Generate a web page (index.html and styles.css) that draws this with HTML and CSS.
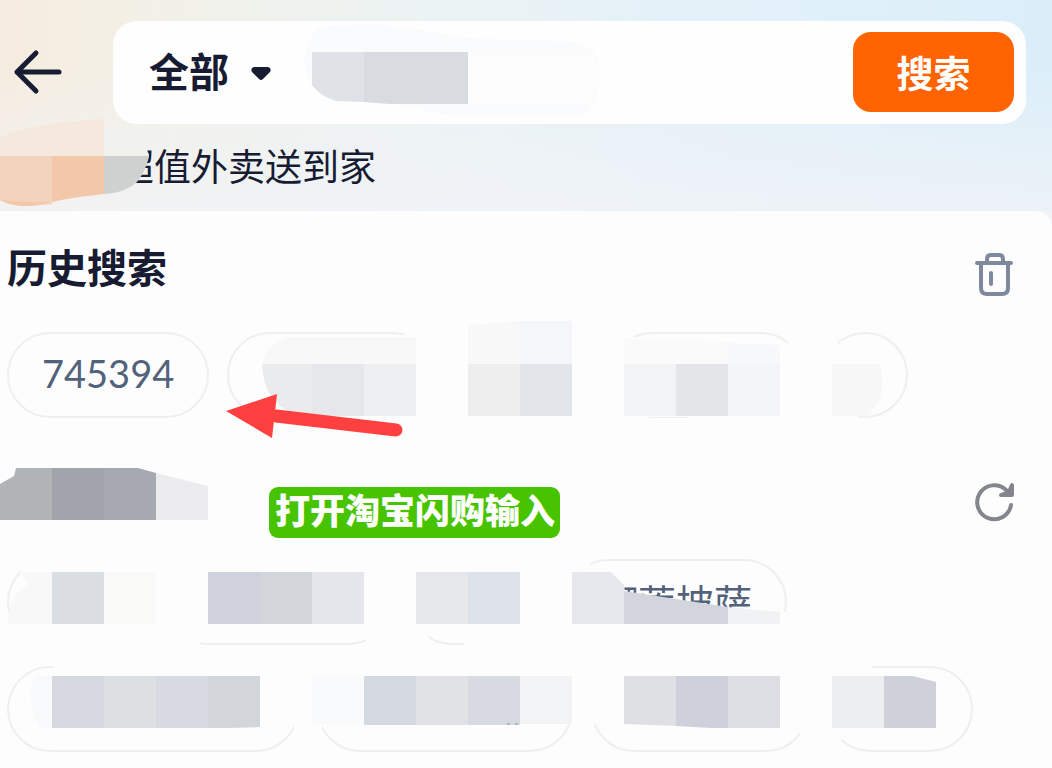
FILE: index.html
```html
<!DOCTYPE html>
<html lang="zh-CN">
<head>
    <meta charset="UTF-8">
    <meta name="viewport" content="width=device-width, initial-scale=1.0">
    <title>搜索</title>
    <link rel="stylesheet" href="styles.css">
</head>
<body>

    <header class="header">
        <div class="top-row">
            <button type="button" class="icon-btn back" aria-label="返回">
                <svg width="52" height="48" viewBox="0 0 52 48" fill="none" stroke="#171c33" stroke-width="5" stroke-linecap="round" stroke-linejoin="round">
                    <path d="M47 23H5M24 4L5 23l19 19"/>
                </svg>
            </button>
            <form class="search-box">
                <select class="scope" aria-label="搜索范围">
                    <option>全部</option>
                </select>
                <svg class="caret" width="20" height="14" viewBox="0 0 20 14" fill="#171c33">
                    <path d="M3 1h14q4 1 2 5l-7 7q-2 2-4 0L1 6Q-1 2 3 1z"/>
                </svg>
                <input class="keyword" type="text" aria-label="搜索内容">
                <button type="button" class="search-btn">搜索</button>
            </form>
        </div>
        <a class="promo" href="#">超值外卖送到家</a>

        <svg class="mosaic" width="1052" height="211" viewBox="0 0 1052 211">
            <path fill="#fafbfc" d="M312 85Q303 75 305 58Q308 32 324 26L380 24Q420 30 468 38L575 42Q596 48 600 65L592 104Q588 117 570 117L450 115L390 104L336 101z"/>
            <path fill="#fcfcfd" d="M468 52h124q12 20 4 52H468z"/>
            <path fill="#dfe2e6" d="M312 52h52v50l-28-1q-16-5-24-16z"/>
            <path fill="#d8dbe0" d="M364 52h104v52h-78l-26-2z"/>
            <path fill="#f1f1ed" d="M104 126h36l9 30h-45z"/>
            <path fill="#f5e8dc" d="M0 138Q30 123 104 119v37H0z"/>
            <path fill="#f3d3bc" d="M0 156h52v48Q15 209 0 200z"/>
            <path fill="#f3c8aa" d="M52 156h52v38q-30 3-52 8z"/>
            <path fill="#f3c8aa" d="M0 200Q25 203 52 202Q20 211 0 200z"/>
            <path fill="#cfd1d1" d="M104 156h45q-3 15-12 26-12 11-33 12z"/>
        </svg>
    </header>

    <main class="panel">
        <div class="section-head">
            <h2>历史搜索</h2>
            <button type="button" class="icon-btn" aria-label="清空历史">
                <svg width="42" height="44" viewBox="0 0 42 44" fill="none" stroke="#7f899c" stroke-width="4" stroke-linecap="round" stroke-linejoin="round">
                    <path d="M4 11h34M8 11v25q0 6 6 6h15q6 0 6-6V11M14 11V7q0-4 4-4h8q4 0 4 4v4M18 21v11"/>
                </svg>
            </button>
        </div>
        <div class="chips">
            <button type="button" class="chip">745394</button>
            <button type="button" class="chip w208" aria-label="历史记录"></button>
            <button type="button" class="chip w138" aria-label="历史记录"></button>
            <button type="button" class="chip w195" aria-label="历史记录"></button>
            <button type="button" class="chip w86" aria-label="历史记录"></button>
        </div>

        <div class="section-head second">
            <button type="button" class="icon-btn" aria-label="换一批">
                <svg width="42" height="42" viewBox="0 0 42 42" fill="none" stroke="#84868e" stroke-width="4" stroke-linecap="round" stroke-linejoin="round">
                    <path d="M38 24A17 17 0 1 1 33 9l3 3"/>
                    <path fill="#84868e" d="M39 4v10H28l8-3z"/>
                </svg>
            </button>
        </div>
        <div class="chips">
            <button type="button" class="chip w138" aria-label="推荐"></button>
            <button type="button" class="chip w228" aria-label="推荐"></button>
            <button type="button" class="chip w138" aria-label="推荐"></button>
            <button type="button" class="chip">榴莲披萨</button>
        </div>
        <div class="chips">
            <button type="button" class="chip w292" aria-label="推荐"></button>
            <button type="button" class="chip w256" aria-label="推荐"></button>
            <button type="button" class="chip w218" aria-label="推荐"></button>
            <button type="button" class="chip w146" aria-label="推荐"></button>
        </div>

        <svg class="mosaic" width="1052" height="557" viewBox="0 211 1052 557">
            <!-- history row -->
            <g fill="#fdfdfd">
                <path d="M404 325h220v95H300q-25-5-38-30V336h142z"/>
                <path d="M600 325h25l5 12 150 6h58v73h20v5H688v-4H640v4h-40z"/>
            </g>
            <path fill="#f8f8f9" d="M262 364q4-22 30-27h124v27z"/>
            <path fill="#eaebed" d="M262 364h50v52h-10q-38-8-40-52z"/>
            <path fill="#e5e7ea" d="M312 364h52v52h-52z"/>
            <path fill="#eeeff1" d="M364 364h52v52h-52z"/>
            <path fill="#f8f8f8" d="M468 325l52-4v43h-52z"/>
            <path fill="#f4f6f9" d="M520 321h52v43h-52z"/>
            <path fill="#eeeeef" d="M468 364h52v52h-52z"/>
            <path fill="#e2e6eb" d="M520 364h52v52h-52z"/>
            <path fill="#fafafa" d="M624 338l105 4v22H624z"/>
            <path fill="#f1f3f5" d="M624 364h52v52h-52z"/>
            <path fill="#e4e5e9" d="M676 364h52v52h-52z"/>
            <path fill="#f4f5f8" d="M728 364h52v52h-52z"/>
            <path fill="#f7f8f9" d="M728 343l52 2v19h-52z"/>
            <path fill="#f7f7f7" d="M832 364h48q4 15 0 36l-12 16h-36z"/>

            <!-- second heading -->
            <path fill="#b0b4b7" d="M0 484l14-8 2-8h36v52H0z"/>
            <path fill="#a2a4ac" d="M52 468h52v52H52z"/>
            <path fill="#a6a8b2" d="M104 468h34l18 5v47h-52z"/>
            <path fill="#ececee" d="M156 473l52 13v34h-52z"/>

            <!-- first suggestion row -->
            <g fill="#fdfdfd">
                <path d="M22 555h568v13l-18 6v50H420l12 18v5h-66v-8l-30 0H200v8H4v-25h12z"/>
                <path d="M464 624h323v24H464zM780 612h10v36h-10z"/>
            </g>
            <path fill="#f8f8f8" d="M22 572h30v52H7q2-20 10-31l11-8z"/>
            <path fill="#dadde2" d="M52 572h52v52H52z"/>
            <path fill="#f9f9f8" d="M104 572h52v52h-52z"/>
            <path fill="#cfd2dc" d="M208 572h52v52h-52z"/>
            <path fill="#d2d5da" d="M260 572h52v52h-52z"/>
            <path fill="#e4e6eb" d="M312 572h52v52h-52z"/>
            <path fill="#e5e7ea" d="M416 572h52v52h-52z"/>
            <path fill="#dde1ea" d="M468 572h52v52h-52z"/>
            <path fill="#e7e8ed" d="M572 572h39l13 13v39h-52z"/>
            <path fill="#d2d6dc" d="M624 591l104 16v17H624z"/>
            <path fill="#f0f2f4" d="M728 607l52 5v12h-52z"/>

            <!-- second suggestion row -->
            <g fill="#fdfdfd">
                <path d="M54 660h818v70h-24v10H800V728H598v-4H322v4h-28V715H54z"/>
            </g>
            <path fill="#f7f9fa" d="M34 676h18v52H40q-14-24-6-52z"/>
            <path fill="#d5d8df" d="M52 676h52v52H52z"/>
            <path fill="#dce0e2" d="M104 676h52v52h-52z"/>
            <path fill="#d7dae2" d="M156 676h52v52h-52z"/>
            <path fill="#d2d5da" d="M208 676h52v51l-30 1h-22z"/>
            <path fill="#f9fafb" d="M312 676h52v48h-52z"/>
            <path fill="#d5d9e2" d="M364 676h52v49h-52z"/>
            <path fill="#e0e2e5" d="M416 676h52v49h-52z"/>
            <path fill="#d7dae0" d="M468 676h52v49h-52z"/>
            <path fill="#f1f3f5" d="M520 676h52v48h-52z"/>
            <path fill="#dfe0e3" d="M624 676h52v50l-52-2z"/>
            <path fill="#ced0dc" d="M676 676h52v52h-16l-36-2z"/>
            <path fill="#dcdee3" d="M728 676h52v52h-52z"/>
            <path fill="#edeef0" d="M832 676h52v52h-52z"/>
            <path fill="#cfd1da" d="M884 676h29l23 6v46h-52z"/>
            <path stroke="#8b92a3" stroke-width="1" d="M507 724h3M515 724h3"/>

            <!-- pointer -->
            <path fill="#ff4040" d="M226 411l51-17-5 44z"/>
            <path stroke="#ff4040" stroke-width="13" stroke-linecap="round" d="M276 416l120 14"/>
        </svg>
        <p class="note">打开淘宝闪购输入</p>
    </main>

</body>
</html>
```
FILE: styles.css
```css
* {
    box-sizing: border-box;
}
body {
    margin: 0;
    min-height: 100vh;
    font-family: Lato, "Noto Sans CJK SC", sans-serif;
    background-color: #f1f3f6;
    color: #171c33;
}
button, input, select {
    font-family: inherit;
    color: inherit;
    border: none;
    background: none;
    padding: 0;
    margin: 0;
}
.header {
    position: relative;
    padding: 21px 26px 0 12px;
    height: 211px;
    background: linear-gradient(to bottom, rgba(241, 243, 247, 0) 30%, rgba(241, 243, 247, 0.8)),
        linear-gradient(to right, #f6ecdf, #f1f1e9 18%, #ecf3f3 40%, #e4f1f9 65%, #daeef9);
}
.top-row {
    display: flex;
    align-items: center;
}
.icon-btn {
    display: flex;
    cursor: pointer;
}
.back {
    width: 101px;
}
.search-box {
    flex: 1;
    min-width: 0;
    height: 103px;
    display: flex;
    align-items: center;
    padding: 0 12px 2px 36px;
    background-color: #fefefe;
    border-radius: 24px;
}
.scope {
    appearance: none;
    width: 82px;
    font-size: 40px;
    line-height: 60px;
    font-weight: 700;
}
.caret {
    margin: 2px 0 0 20px;
}
.keyword {
    flex: 1;
    min-width: 0;
    height: 80px;
    padding: 0 40px;
    font-size: 37px;
}
.search-btn {
    width: 161px;
    height: 80px;
    border-radius: 18px;
    background-color: #ff6302;
    color: white;
    font-size: 37px;
    font-weight: 700;
    cursor: pointer;
}
.promo {
    display: inline-block;
    margin: 15px 0 0 105px;
    font-size: 37px;
    line-height: 56px;
    color: #171c33;
    text-decoration: none;
}
.mosaic {
    position: absolute;
    top: 0;
    left: 0;
    pointer-events: none;
}
.panel {
    position: relative;
    padding: 0 0 16px 7px;
    background-color: #fdfdfd;
    border-top-right-radius: 16px;
    overflow: hidden;
}
.section-head {
    display: flex;
    align-items: center;
    justify-content: space-between;
    height: 121px;
    padding: 4px 37px 0 0;
}
.section-head h2 {
    margin: 0 0 12px;
    font-size: 40px;
    line-height: 60px;
    font-weight: 700;
}
.second {
    justify-content: flex-end;
    height: 141px;
    padding-top: 26px;
}
.chips {
    display: flex;
    gap: 18px;
}
.chips + .chips {
    margin-top: 21px;
}
.chip {
    flex: none;
    height: 86px;
    padding: 0 33px 4px;
    border: 2px solid #efeff0;
    border-radius: 43px;
    font-size: 38px;
    color: #52617c;
    white-space: nowrap;
    cursor: pointer;
}
.w86 {
    width: 86px;
}
.w138 {
    width: 138px;
}
.w146 {
    width: 146px;
}
.w195 {
    width: 195px;
}
.w208 {
    width: 208px;
}
.w218 {
    width: 218px;
}
.w228 {
    width: 228px;
}
.w256 {
    width: 256px;
}
.w292 {
    width: 292px;
}
.note {
    position: absolute;
    top: 276px;
    left: 269px;
    margin: 0;
    padding: 0 5px 5px 6px;
    border-radius: 9px;
    background-color: #48c300;
    color: white;
    font-size: 35px;
    line-height: 46px;
    font-weight: 900;
}
```
